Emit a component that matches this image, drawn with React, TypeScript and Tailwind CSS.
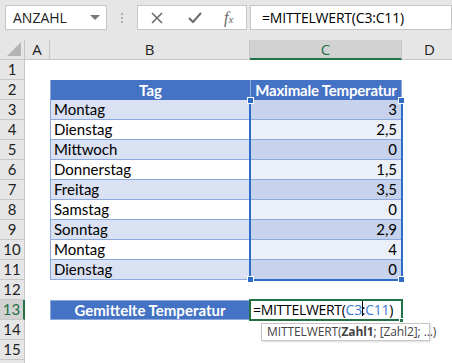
import React from 'react';

const days = ['Montag', 'Dienstag', 'Mittwoch', 'Donnerstag', 'Freitag', 'Samstag', 'Sonntag', 'Montag', 'Dienstag'];
const temps = ['3', '2,5', '0', '1,5', '3,5', '0', '2,9', '4', '0'];

const ui = { fontFamily: '"Open Sans", "Noto Sans", sans-serif' };
const cell = { fontFamily: 'Lato, "Noto Sans", sans-serif' };

const Handle: React.FC<{ className: string }> = ({ className }) => (
  <div className={`absolute w-[7px] h-[7px] bg-[#2f6cc8] border border-white ${className}`} />
);

const App: React.FC = () => {
  const rows = Array.from({ length: 16 }, (_, i) => i + 1);

  const renderB = (r: number) => {
    if (r === 2)
      return (
        <div className="h-full bg-[#4472c4] border-l border-[#8ea9db] text-white font-bold text-center leading-[20px]">
          Tag
        </div>
      );
    if (r >= 3 && r <= 11) {
      const band = r % 2 === 1;
      return (
        <div
          className={`h-full border-l border-b border-[#8ea9db] pl-[3px] leading-[19px] text-black ${
            band ? 'bg-[#d9e1f2]' : 'bg-white'
          }`}
        >
          {days[r - 3]}
        </div>
      );
    }
    if (r === 13)
      return (
        <div className="h-full bg-[#4472c4] border border-[#8ea9db] text-white font-bold text-center leading-[18px]">
          Gemittelte Temperatur
        </div>
      );
    return <div className="h-full" />;
  };

  const renderC = (r: number) => {
    if (r === 2)
      return (
        <div className="h-full bg-[#4472c4] border-l border-r border-[#8ea9db] text-white font-bold text-center leading-[20px] tracking-[-0.2px]">
          Maximale Temperatur
        </div>
      );
    if (r >= 3 && r <= 11) {
      const band = r % 2 === 1;
      return (
        <div
          className={`h-full border-b border-r border-[#8ea9db] pr-[4px] text-right leading-[19px] text-black ${
            band ? 'bg-[#c7d3ec]' : 'bg-[#ebeff8]'
          }`}
        >
          {temps[r - 3]}
        </div>
      );
    }
    if (r === 13)
      return (
        <div className="h-full bg-white pl-[3px] leading-[20px] text-black text-[14px] tracking-[-0.3px]" style={ui}>
          =MITTELWERT(<span className="text-[#3d7bd0]">C3</span>
          <span className="relative">
            <span className="absolute left-0 top-[-1px] w-px h-[17px] bg-black" />:
          </span>
          <span className="text-[#3d7bd0]">C11</span>)
        </div>
      );
    return <div className="h-full" />;
  };

  return (
    <div className="w-[452px] h-[363px] overflow-hidden bg-white relative">
      {/* formula bar */}
      <div className="h-[40px] bg-[#e6e6e6] flex items-start pt-[5px] pl-[5px]" style={ui}>
        <div className="w-[102px] h-[25px] bg-white border border-[#c6c6c6] flex items-center justify-between pl-[7px] pr-[6px]">
          <span className="text-[14px] text-[#222]">ANZAHL</span>
          <span className="w-0 h-0 border-l-[5px] border-r-[5px] border-t-[5px] border-l-transparent border-r-transparent border-t-[#777]" />
        </div>
        <div className="w-[30px] h-[25px] flex flex-col items-center justify-center gap-[2px]">
          <span className="w-[2px] h-[2px] bg-[#b0b0b0]" />
          <span className="w-[2px] h-[2px] bg-[#b0b0b0]" />
          <span className="w-[2px] h-[2px] bg-[#b0b0b0]" />
        </div>
        <div className="w-[110px] h-[25px] bg-white border border-[#c6c6c6] flex items-center">
          <svg width="12" height="12" viewBox="0 0 12 12" className="ml-[13px]">
            <path d="M1 1 L11 11 M11 1 L1 11" stroke="#6b6b6b" strokeWidth="1.6" />
          </svg>
          <svg width="14" height="12" viewBox="0 0 14 12" className="ml-[25px]">
            <path d="M1 6 L5 10 L13 1" stroke="#6b6b6b" strokeWidth="2" fill="none" />
          </svg>
          <span
            className="ml-[22px] text-[#666] italic text-[16px] leading-none"
            style={{ fontFamily: '"Liberation Serif", serif' }}
          >
            f<span className="text-[11px]">x</span>
          </span>
        </div>
        <div className="ml-[3px] flex-1 h-[25px] bg-white border border-[#c6c6c6] pl-[11px] text-[14px] tracking-[-0.2px] leading-[23px] text-black">
          =MITTELWERT(C3:C11)
        </div>
      </div>

      {/* sheet */}
      <div
        className="relative grid grid-cols-[25px_25px_200px_152px_1fr] auto-rows-[20px] text-[15px]"
        style={cell}
      >
        {/* column headers */}
        <div className="relative bg-[#e6e6e6] border-r border-b border-[#c6c6c6]">
          <div className="absolute right-[3px] bottom-[3px] w-0 h-0 border-b-[14px] border-l-[14px] border-b-[#b4b4b4] border-l-transparent" />
        </div>
        <div className="bg-[#e6e6e6] border-r border-b border-[#c6c6c6] text-center leading-[19px] text-[#222]" style={ui}>
          A
        </div>
        <div className="bg-[#e6e6e6] border-r border-b border-[#c6c6c6] text-center leading-[19px] text-[#222]" style={ui}>
          B
        </div>
        <div className="bg-[#d2d2d2] border-r border-[#c6c6c6] border-b-2 border-b-[#217346] text-center leading-[18px] text-[#217346]" style={ui}>
          C
        </div>
        <div className="bg-[#e6e6e6] border-b border-[#c6c6c6] text-left pl-[22px] leading-[19px] text-[#222]" style={ui}>
          D
        </div>

        {rows.map((r) => (
          <React.Fragment key={r}>
            <div
              className={`border-b border-[#c6c6c6] text-center leading-[19px] ${
                r === 13
                  ? 'bg-[#d2d2d2] text-[#217346] border-r-2 border-r-[#217346]'
                  : 'bg-[#e6e6e6] text-[#222] border-r border-r-[#c6c6c6]'
              }`}
            >
              {r}
            </div>
            <div />
            {renderB(r)}
            {renderC(r)}
            <div />
          </React.Fragment>
        ))}

        {/* selection C3:C11 */}
        <div className="absolute left-[249px] top-[59px] w-[154px] h-[182px] border-2 border-[#2f6cc8] border-t-0 pointer-events-none" />
        <Handle className="left-[247px] top-[57px]" />
        <Handle className="left-[398px] top-[57px]" />
        <Handle className="left-[247px] top-[236px]" />
        <Handle className="left-[398px] top-[236px]" />

        {/* active cell C13 */}
        <div className="absolute left-[249px] top-[259px] w-[154px] h-[22px] border-2 border-[#217346] pointer-events-none" />
        <div className="absolute left-[399px] top-[278px] w-[5px] h-[5px] bg-[#217346] border border-white" />

        {/* tooltip */}
        <div
          className="absolute left-[261px] top-[283px] w-[169px] h-[18px] bg-white border border-[#c6c6c6] shadow-[1px_1px_2px_rgba(0,0,0,0.15)] pl-[5px] text-[12px] tracking-[-0.1px] leading-[16px] text-[#444] whitespace-nowrap"
          style={ui}
        >
          MITTELWERT(<b>Zahl1</b>; [Zahl2]; ...)
        </div>
      </div>
    </div>
  );
};

export default App;
